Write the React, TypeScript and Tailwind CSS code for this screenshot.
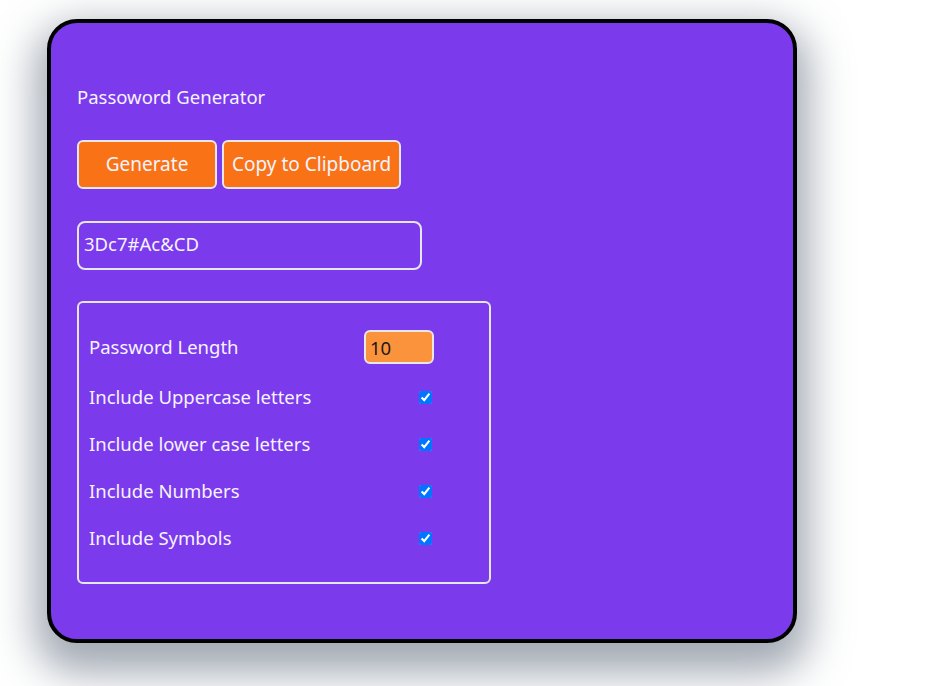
export default function App() {
  const options = [
    "Include Uppercase letters",
    "Include lower case letters",
    "Include Numbers",
    "Include Symbols",
  ];

  return (
    <div className="min-h-screen bg-white pt-[19px] pl-[47px] font-['Noto_Sans',sans-serif]">
      <div className="h-[624px] w-[750px] rounded-[30px] border-4 border-black bg-[#7c3aed] px-[26px] pt-[60px] text-[#f5f3ff] shadow-[0_18px_40px_12px_rgba(71,85,105,0.5)]">
        <h1 className="text-[18.5px] leading-[27px]">Passoword Generator</h1>

        <div className="mt-[30px] flex gap-[5px]">
          <button className="h-[49px] w-[140px] rounded-md border-2 border-[#e5e7eb] bg-[#f97316] text-[19px]">
            Generate
          </button>
          <button className="h-[49px] rounded-md border-2 border-[#e5e7eb] bg-[#f97316] px-[8px] text-[19px]">
            Copy to Clipboard
          </button>
        </div>

        <input
          readOnly
          value="3Dc7#Ac&CD"
          className="mt-[32px] block h-[49px] w-[345px] rounded-lg border-2 border-[#e5e7eb] bg-transparent px-[5px] pb-[4px] text-[18.5px] text-[#f5f3ff] outline-none"
        />

        <div className="mt-[31px] h-[283px] w-[414px] rounded-md border-2 border-[#e5e7eb] pt-[27px] pl-[10px]">
          <div className="flex h-[34px] items-center">
            <span className="w-[275px] text-[18.5px]">Password Length</span>
            <input
              readOnly
              type="number"
              value={10}
              className="h-[34px] w-[70px] rounded-md border-2 border-[#e5e7eb] bg-[#fb923c] px-[4px] text-[18.5px] text-[#1c1917] outline-none [appearance:textfield]"
            />
          </div>
          <div className="mt-[21px] flex flex-col gap-[23px]">
            {options.map((label) => (
              <label key={label} className="flex h-[24px] items-center">
                <span className="w-[275px] text-[18.5px] leading-[24px]">{label}</span>
                <span className="flex w-[70px] justify-end pr-[2px]">
                  <input type="checkbox" defaultChecked className="h-[13px] w-[13px]" />
                </span>
              </label>
            ))}
          </div>
        </div>
      </div>
    </div>
  );
}
